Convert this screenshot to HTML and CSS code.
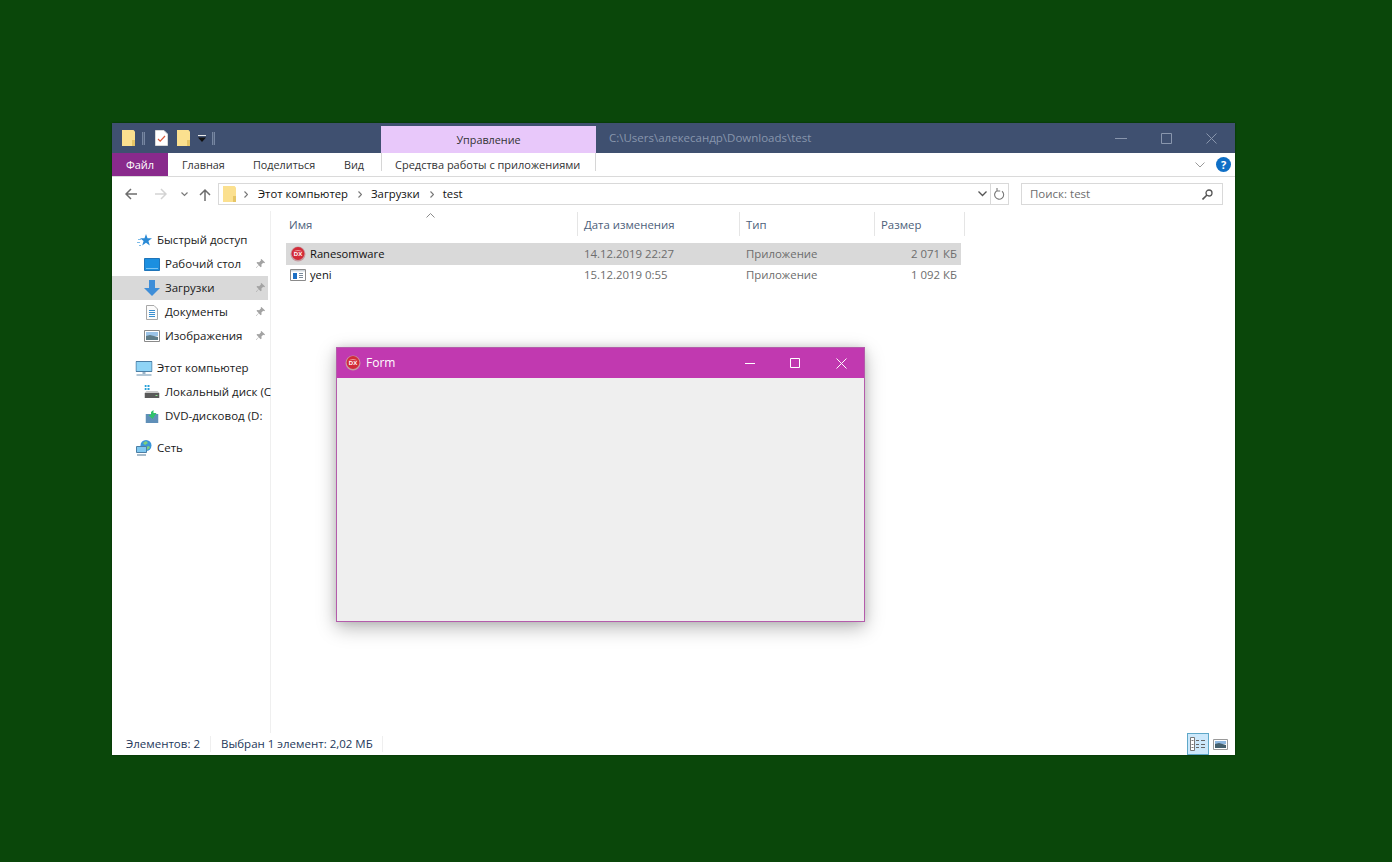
FILE: index.html
```html
<!DOCTYPE html>
<html lang="ru">
<head>
<meta charset="utf-8">
<title>test</title>
<link rel="stylesheet" href="styles.css">
</head>
<body>
<svg class="defs" width="0" height="0" aria-hidden="true">
  <symbol id="folder" viewBox="0 0 13 16">
    <path d="M0 0H11.500L13 1.500V16H0Z" fill="#fbe08f"/>
    <path d="M10 10h3v6h-3z" fill="#e6c566"/>
  </symbol>
  <symbol id="dx" viewBox="0 0 16 16">
    <circle cx="8" cy="8" r="7.500" fill="#c79aa0"/>
    <circle cx="8" cy="7.500" r="6.400" fill="#d22b38"/>
    <path d="M3 5.600Q8 2.600 13 5.600Q8 4.400 3 5.600Z" fill="#ee9a9f"/>
  </symbol>
  <symbol id="pin" viewBox="0 0 12 12">
    <path d="M7 1l4 4-1 .6-1-.4-2 2 .2 2-1 1-2.200-2.300L1.500 11 1 10.500l2.900-2.900L1.600 5.300l1-1 2 .2 2-2-.4-1Z" fill="#a3a3a3"/>
  </symbol>
</svg>

<main class="explorer">
  <header class="titlebar">
    <div class="qat">
      <svg width="13" height="16"><use href="#folder"/></svg>
      <span class="qat-sep"></span>
      <svg class="qat-note" width="13" height="16" viewBox="0 0 13 16">
        <path d="M.5.500H9L12.500 4V15.500H.5Z" fill="#fff" stroke="#d8d8d8"/>
        <path d="M3 9l2.200 2.200L10 6" fill="none" stroke="#d8583a" stroke-width="1.200"/>
      </svg>
      <svg class="qat-folder2" width="13" height="16"><use href="#folder"/></svg>
      <svg class="qat-drop" width="8" height="9" viewBox="0 0 8 9">
        <path d="M0 1.500h8" stroke="#e8e8e8" stroke-width="1"/>
        <path d="M0 3.500h8L4 8Z" fill="#111"/>
      </svg>
      <span class="qat-sep qat-sep-last"></span>
    </div>
    <div class="context-tab">Управление</div>
    <div class="path-title">C:\Users\алекесандр\Downloads\test</div>
    <div class="win-controls">
      <svg width="12" height="12" viewBox="0 0 12 12"><path d="M0 6.500h12" stroke="#8996ad"/></svg>
      <svg width="11" height="11" viewBox="0 0 11 11"><path d="M.5.500h10v10H.5z" fill="none" stroke="#8996ad"/></svg>
      <svg width="11" height="11" viewBox="0 0 11 11"><path d="M.5.500l10 10M10.500.5l-10 10" fill="none" stroke="#8996ad"/></svg>
    </div>
  </header>

  <nav class="ribbon">
    <div class="tab tab-file">Файл</div>
    <div class="tab tab-home">Главная</div>
    <div class="tab tab-share">Поделиться</div>
    <div class="tab tab-view">Вид</div>
    <div class="tab tab-tools">Средства работы с приложениями</div>
    <div class="ribbon-right">
      <svg width="10" height="6" viewBox="0 0 10 6"><path d="M.5.500L5 5 9.500.5" fill="none" stroke="#9a9a9a"/></svg>
      <span class="help">?</span>
    </div>
  </nav>

  <div class="addressbar">
    <div class="nav-buttons">
      <svg width="12" height="12" viewBox="0 0 12 12"><path d="M12 6H1M6 1L1 6l5 5" fill="none" stroke="#6d6d6d" stroke-width="1.500"/></svg>
      <svg class="nav-forward" width="12" height="12" viewBox="0 0 12 12"><path d="M0 6h11M6 1l5 5-5 5" fill="none" stroke="#d3d3d3" stroke-width="1.500"/></svg>
      <svg class="nav-recent" width="7" height="5" viewBox="0 0 7 5"><path d="M.5.500l3 3 3-3" fill="none" stroke="#7a7a7a" stroke-width="1.200"/></svg>
      <svg class="nav-up" width="12" height="13" viewBox="0 0 12 13"><path d="M6 13V2M1 7l5-5 5 5" fill="none" stroke="#6d6d6d" stroke-width="1.500"/></svg>
    </div>
    <div class="crumbs">
      <svg width="13" height="16"><use href="#folder"/></svg>
      <svg class="crumb-arrow crumb-arrow-first" width="4" height="7" viewBox="0 0 4 7"><path d="M.5.500l3 3-3 3" fill="none" stroke="#777" stroke-width="1.200"/></svg>
      <span class="crumb">Этот компьютер</span>
      <svg class="crumb-arrow" width="4" height="7" viewBox="0 0 4 7"><path d="M.5.500l3 3-3 3" fill="none" stroke="#777" stroke-width="1.200"/></svg>
      <span class="crumb">Загрузки</span>
      <svg class="crumb-arrow" width="4" height="7" viewBox="0 0 4 7"><path d="M.5.500l3 3-3 3" fill="none" stroke="#777" stroke-width="1.200"/></svg>
      <span class="crumb">test</span>
      <div class="crumbs-end">
        <svg width="9" height="6" viewBox="0 0 9 6"><path d="M.5.500L4.500 4.500 8.500.5" fill="none" stroke="#555" stroke-width="1.300"/></svg>
        <span class="refresh">
          <svg width="11" height="12" viewBox="0 0 11 12"><path d="M3.500 2.500A4.500 4.500 0 1 0 8 3.200M3 0v3h3.200" fill="none" stroke="#777" stroke-width="1.100"/></svg>
        </span>
      </div>
    </div>
    <div class="search">
      <span>Поиск: test</span>
      <svg width="11" height="11" viewBox="0 0 11 11"><circle cx="7" cy="4" r="3" fill="none" stroke="#555" stroke-width="1.300"/><path d="M5 6l-4.500 4.500" stroke="#555" stroke-width="1.600"/></svg>
    </div>
  </div>

  <div class="body">
    <aside class="sidebar">
      <div class="side-row side-top">
        <svg class="side-icon" width="16" height="15" viewBox="0 0 16 15"><path d="M9 1l1.500 4.200H15l-3.600 2.800 1.400 4.500L9 9.800 5.200 12.500 6.600 8 3 5.200h4.500Z" fill="#2a8ad6"/><path d="M1 6.500h3M0 9.500h3M2 12.500h2" stroke="#7cbbe8"/></svg>
        <span>Быстрый доступ</span>
      </div>
      <div class="side-row side-sub">
        <svg class="side-icon" width="16" height="13" viewBox="0 0 16 13"><path d="M.5.500h15v12H.5z" fill="#1b8fe0" stroke="#1f74b8"/><path d="M2 10.500h12" stroke="#7cc4f2"/></svg>
        <span class="side-label">Рабочий стол</span>
        <svg class="pin" width="11" height="11"><use href="#pin"/></svg>
      </div>
      <div class="side-row side-sub side-selected">
        <svg class="side-icon" width="16" height="16" viewBox="0 0 16 16"><path d="M5 0h6v8h5l-8 8-8-8h5Z" fill="#3f8ed8"/></svg>
        <span class="side-label">Загрузки</span>
        <svg class="pin" width="11" height="11"><use href="#pin"/></svg>
      </div>
      <div class="side-row side-sub">
        <svg class="side-icon" width="12" height="15" viewBox="0 0 12 15"><path d="M.5.500H8L11.500 4V14.500H.5Z" fill="#fbfbfb" stroke="#a8a8a8"/><path d="M3 5.500h6M3 7.500h6M3 9.500h6M3 11.500h6" stroke="#3a8fd0"/></svg>
        <span class="side-label">Документы</span>
        <svg class="pin" width="11" height="11"><use href="#pin"/></svg>
      </div>
      <div class="side-row side-sub">
        <svg class="side-icon" width="16" height="12" viewBox="0 0 16 12"><path d="M.5.500h15v11H.5z" fill="#fff" stroke="#8a8a8a"/><path d="M2 2h12v4H2z" fill="#9cc4e8"/><path d="M2 6l4-1 8 2v3H2z" fill="#5f7c88"/></svg>
        <span class="side-label">Изображения</span>
        <svg class="pin" width="11" height="11"><use href="#pin"/></svg>
      </div>

      <div class="side-row side-top side-group">
        <svg class="side-icon side-icon-pc" width="17" height="15" viewBox="0 0 17 15"><path d="M.5.500h16v10H.5z" fill="#8fd4f6" stroke="#4c7ea4"/><path d="M7 11h3v2H7z" fill="#9ab4c8"/><path d="M1 14h15" stroke="#9ab4c8" stroke-width="1.500"/></svg>
        <span>Этот компьютер</span>
      </div>
      <div class="side-row side-sub">
        <svg class="side-icon" width="15" height="14" viewBox="0 0 15 14"><path d="M0 0h2v2H0zM3 0h2v2H3zM0 3h2v2H0zM3 3h2v2H3z" fill="#27a0d8"/><path d="M0 8h15v5H0z" fill="#5a5a5a"/><path d="M2 6h11l2 2H0z" fill="#c9c9c9"/><path d="M11 10.500h2" stroke="#8fe38f"/></svg>
        <span class="side-label">Локальный диск (C</span>
      </div>
      <div class="side-row side-sub">
        <svg class="side-icon" width="13" height="13" viewBox="0 0 13 13"><path d="M0 4h13v9H0z" fill="#5f8fb8"/><path d="M8 0v3h3L7 9 3 5h2.500V2Z" fill="#2fc26a"/></svg>
        <span class="side-label">DVD-дисковод (D:</span>
      </div>

      <div class="side-row side-top side-group">
        <svg class="side-icon side-icon-pc" width="16" height="16" viewBox="0 0 16 16"><circle cx="10" cy="5.500" r="5.500" fill="#3a96d8"/><path d="M7 3l3-2 2 2-3 2zM10 7l3-1 1 2-3 2z" fill="#7fd07a"/><path d="M.5 6.500h10v6H.5z" fill="#7fc8f0" stroke="#4c7ea4"/><path d="M1 15h9" stroke="#8aa4b8" stroke-width="1.500"/></svg>
        <span>Сеть</span>
      </div>
    </aside>

    <section class="files">
      <div class="file-head">
        <div class="col col-name head-cell">Имя<svg class="sort" width="9" height="5" viewBox="0 0 9 5"><path d="M.5 4.500l4-4 4 4" fill="none" stroke="#8a8a8a"/></svg></div>
        <div class="col col-date head-cell">Дата изменения</div>
        <div class="col col-type head-cell">Тип</div>
        <div class="col col-size head-cell">Размер</div>
      </div>
      <div class="file-row file-selected">
        <div class="col col-name name-cell"><svg width="16" height="16" viewBox="0 0 16 16"><use href="#dx"/><text class="dx-text" x="8" y="9.700">DX</text></svg><span>Ranesomware</span></div>
        <div class="col col-date">14.12.2019 22:27</div>
        <div class="col col-type">Приложение</div>
        <div class="col col-size num">2 071 КБ</div>
      </div>
      <div class="file-row">
        <div class="col col-name name-cell"><svg width="16" height="12" viewBox="0 0 16 12"><path d="M.5.500h15v11H.5z" fill="#fff" stroke="#8a8a8a"/><path d="M1 1h14v1.500H1z" fill="#cfd6dc"/><path d="M3 4h4v6H3z" fill="#1c6fc4"/><path d="M9 4.500h4M9 6.500h4M9 8.500h4" stroke="#7a8a9a"/></svg><span>yeni</span></div>
        <div class="col col-date">15.12.2019 0:55</div>
        <div class="col col-type">Приложение</div>
        <div class="col col-size num">1 092 КБ</div>
      </div>
    </section>
  </div>

  <footer class="statusbar">
    <span class="status-count">Элементов: 2</span>
    <span class="status-sel">Выбран 1 элемент: 2,02 МБ</span>
    <div class="view-buttons">
      <span class="view-btn view-active">
        <svg width="16" height="14" viewBox="0 0 16 14"><path d="M.5.500h4v13h-4z" fill="#fff" stroke="#777"/><path d="M1.500 3.500h2M1.500 7.500h2M1.500 10.500h2" stroke="#777"/><path d="M6 3.500h3M11 3.500h4M6 7.500h3M11 7.500h4M6 10.500h3M11 10.500h4" stroke="#666"/></svg>
      </span>
      <span class="view-btn">
        <svg width="15" height="11" viewBox="0 0 15 11"><path d="M.5.500h14v10H.5z" fill="#fff" stroke="#999"/><path d="M2 2h11v3H2z" fill="#8fb8e0"/><path d="M2 5l4-1 7 2v3H2z" fill="#45606e"/></svg>
      </span>
    </div>
  </footer>
</main>

<section class="form-window">
  <header class="form-title">
    <svg width="16" height="16" viewBox="0 0 16 16"><use href="#dx"/><text class="dx-text" x="8" y="9.700">DX</text></svg>
    <span class="form-name">Form</span>
    <div class="form-controls">
      <svg width="10" height="10" viewBox="0 0 10 10"><path d="M0 5.500h10" stroke="#fff"/></svg>
      <svg width="10" height="10" viewBox="0 0 10 10"><path d="M.5.500h9v9h-9z" fill="none" stroke="#fff"/></svg>
      <svg class="form-close" width="11" height="11" viewBox="0 0 11 11"><path d="M.5.500l10 10M10.500.5l-10 10" fill="none" stroke="#fff"/></svg>
    </div>
  </header>
  <div class="form-body"></div>
</section>
</body>
</html>
```

FILE: styles.css
```css
* { box-sizing: border-box; }
html, body { height: 100%; }
body {
  margin: 0;
  background: #0a470a;
  font: 12px/16px "Open Sans", "Noto Sans", sans-serif;
  color: #1a1a1a;
  overflow: hidden;
}
svg { display: block; flex: none; }
.defs { position: absolute; }
.dx-text {
  font: 700 6px "Liberation Sans", sans-serif;
  fill: #fff;
  text-anchor: middle;
}

.explorer {
  position: absolute;
  left: 112px;
  top: 123px;
  width: 1123px;
  height: 632px;
  background: #fff;
  display: flex;
  flex-direction: column;
  box-shadow: 0 0 2px rgba(0, 0, 0, .4);
}

/* Title bar */
.titlebar {
  flex: 0 0 30px;
  background: #3f5070;
  display: flex;
  align-items: flex-end;
}
.qat {
  width: 269px;
  height: 30px;
  padding-left: 10px;
  display: flex;
  align-items: center;
}
.qat-sep {
  width: 3px;
  height: 13px;
  margin-left: 7px;
  border: 1px solid #7686a2;
  border-width: 0 1px;
  background: #54647f;
}
.qat-note { margin-left: 10px; }
.qat-folder2 { margin-left: 9px; }
.qat-drop { margin-left: 8px; }
.qat-sep-last { margin-left: 6px; }
.context-tab {
  width: 215px;
  height: 27px;
  background: #e8c8fa;
  color: #333;
  text-align: center;
  font-size: 10.800px;
  line-height: 28px;
}
.path-title {
  height: 30px;
  line-height: 29px;
  margin-left: 13px;
  color: #8896ad;
  font-size: 11.500px;
  flex: 1;
}
.win-controls {
  height: 30px;
  display: flex;
  align-items: center;
  gap: 34px;
  padding-right: 18px;
}

/* Ribbon tabs */
.ribbon {
  flex: 0 0 24px;
  display: flex;
  border-bottom: 1px solid #dadada;
  align-items: stretch;
}
.tab {
  line-height: 23px;
  font-size: 10.800px;
  color: #333;
}
.tab-file {
  width: 56px;
  background: #892a8c;
  color: #fff;
  text-align: center;
  font-size: 11px;
}
.tab-home { width: 85px; padding-left: 14px; }
.tab-share { width: 91px; }
.tab-view { width: 37px; }
.tab-tools {
  width: 215px;
  padding-left: 13px;
  border: 1px solid #d6d6d6;
  border-width: 0 1px;
  height: 18px;
  font-size: 11px;
  white-space: nowrap;
}
.ribbon-right {
  margin-left: auto;
  display: flex;
  align-items: center;
  gap: 11px;
  padding-right: 4px;
}
.help {
  width: 15px;
  height: 15px;
  border-radius: 50%;
  background: #0f6fc6;
  color: #fff;
  font-weight: 700;
  font-size: 11px;
  line-height: 15px;
  text-align: center;
}

/* Address bar */
.addressbar {
  flex: 0 0 34px;
  display: flex;
  align-items: center;
}
.nav-buttons {
  width: 106px;
  padding-left: 13px;
  display: flex;
  align-items: center;
}
.nav-forward { margin-left: 18px; }
.nav-recent { margin-left: 14px; }
.nav-up { margin-left: 11px; }
.crumbs {
  width: 791px;
  height: 22px;
  border: 1px solid #d9d9d9;
  display: flex;
  align-items: center;
  padding-left: 4px;
  color: #111;
  font-size: 11.300px;
}
.crumb-arrow { margin: 0 9px 0 10px; }
.crumb-arrow-first { margin: 0 10px 0 8px; }
.crumbs-end {
  margin-left: auto;
  display: flex;
  align-items: center;
  height: 100%;
  gap: 3px;
}
.refresh {
  width: 18px;
  height: 100%;
  border-left: 1px solid #d9d9d9;
  display: flex;
  align-items: center;
  justify-content: center;
}
.search {
  width: 202px;
  height: 22px;
  margin-left: 12px;
  border: 1px solid #d9d9d9;
  padding: 0 9px 0 8px;
  display: flex;
  align-items: center;
  justify-content: space-between;
  color: #6d6d6d;
  font-size: 11.500px;
}

/* Main area */
.body {
  flex: 1;
  display: flex;
  min-height: 0;
}
.sidebar {
  width: 159px;
  padding-top: 17px;
  border-right: 1px solid #efefef;
  font-size: 11.500px;
  color: #1a1a1a;
}
.side-row {
  height: 24px;
  width: 156px;
  display: flex;
  align-items: center;
  white-space: nowrap;
  position: relative;
}
.side-top { padding-left: 45px; }
.side-sub { padding-left: 53px; }
.side-icon { position: absolute; transform: translate(-50%, 0); }
.side-top .side-icon { left: 33px; }
.side-top .side-icon-pc { left: 32px; }
.side-sub .side-icon { left: 40px; }
.side-group { margin-top: 8px; }
.side-selected { background: #d9d9d9; }
.pin { position: absolute; left: 143px; top: 6px; }

.files {
  flex: 1;
  padding-left: 15px;
}
.file-head {
  display: flex;
  height: 32px;
  padding-top: 1px;
}
.head-cell {
  height: 24px;
  line-height: 25px;
  border-right: 1px solid #e5e5e5;
  color: #4c607a;
  font-size: 11.400px;
  position: relative;
}
.sort { position: absolute; left: 140px; top: 1px; }
.col { flex: none; padding-left: 6px; white-space: nowrap; }
.col-name { width: 292px; padding-left: 3px; }
.col-date { width: 162px; }
.col-type { width: 135px; }
.col-size { width: 90px; }
.file-row {
  display: flex;
  width: 675px;
  height: 21px;
  line-height: 20px;
  color: #6d6d6d;
  font-size: 11.400px;
}
.file-selected { height: 22px; line-height: 22px; background: #d9d9d9; }
.name-cell {
  display: flex;
  align-items: center;
  gap: 4px;
  color: #111;
  height: 20px;
  font-size: 11.200px;
}
.file-selected .name-cell { height: 21px; }
.file-row .col-name { width: 292px; padding-left: 4px; }
.file-row .col-size { width: 86px; padding-left: 0; padding-right: 4px; }
.num { text-align: right; }

/* Status bar */
.statusbar {
  flex: 0 0 22px;
  display: flex;
  align-items: center;
  color: #24385a;
  font-size: 11.500px;
}
.status-count {
  width: 99px;
  padding-left: 14px;
  border-right: 1px solid #efefef;
}
.status-sel {
  width: 172px;
  padding-left: 10px;
  border-right: 1px solid #efefef;
}
.view-buttons {
  margin-left: auto;
  display: flex;
  align-items: center;
  padding-right: 4px;
  height: 22px;
}
.view-btn {
  width: 22px;
  height: 22px;
  display: flex;
  align-items: center;
  justify-content: center;
}
.view-active {
  background: #cce8fb;
  border: 1px solid #5fa8c8;
}

/* Form window */
.form-window {
  position: absolute;
  left: 336px;
  top: 347px;
  width: 529px;
  height: 275px;
  border: 1px solid #b45cab;
  background: #efefef;
  display: flex;
  flex-direction: column;
  box-shadow: 0 6px 18px rgba(0, 0, 0, .28), 0 0 8px rgba(0, 0, 0, .12);
}
.form-title {
  flex: 0 0 30px;
  background: #c139b0;
  color: #fff;
  display: flex;
  align-items: center;
  padding-left: 8px;
}
.form-name { margin-left: 5px; font-size: 12px; }
.form-controls {
  margin-left: auto;
  display: flex;
  align-items: center;
  gap: 35px;
  padding-right: 17px;
}
.form-close { margin-left: 1px; }
.form-body { flex: 1; }
```
